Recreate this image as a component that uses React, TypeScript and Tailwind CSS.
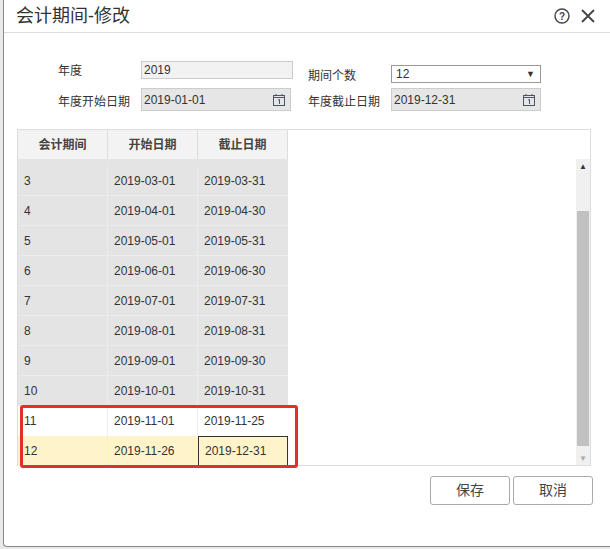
import React from 'react';

const rows = [
  ['3', '2019-03-01', '2019-03-31'],
  ['4', '2019-04-01', '2019-04-30'],
  ['5', '2019-05-01', '2019-05-31'],
  ['6', '2019-06-01', '2019-06-30'],
  ['7', '2019-07-01', '2019-07-31'],
  ['8', '2019-08-01', '2019-08-31'],
  ['9', '2019-09-01', '2019-09-30'],
  ['10', '2019-10-01', '2019-10-31'],
];

const Cal = () => (
  <svg width="14" height="14" viewBox="0 0 14 14" className="text-gray-600">
    <rect x="1.5" y="2.5" width="11" height="10" fill="none" stroke="currentColor" />
    <line x1="1.5" y1="4.5" x2="12.5" y2="4.5" stroke="currentColor" />
    <line x1="4" y1="1" x2="4" y2="3" stroke="currentColor" />
    <line x1="10" y1="1" x2="10" y2="3" stroke="currentColor" />
    <path d="M6 7 L7.5 6.5 V11" fill="none" stroke="currentColor" />
  </svg>
);

export default function App() {
  const font = { fontFamily: '"Liberation Sans", "Noto Sans CJK SC", sans-serif' };
  return (
    <div className="w-[610px] h-[549px] bg-[#e9e9e9] relative" style={font}>
      <div className="absolute left-[3px] top-0 w-[607px] h-[547px] bg-white border-l border-b border-[#888] rounded-bl">
        <div className="h-[33px] border-b border-[#ddd] flex items-center justify-between pl-[12px] pr-[14px]">
          <span className="text-[18px] text-[#333]">会计期间-修改</span>
          <div className="flex items-center gap-[10px] text-[#444]">
            <svg width="16" height="16" viewBox="0 0 16 16">
              <circle cx="8" cy="8" r="7" fill="none" stroke="currentColor" strokeWidth="1.4" />
              <text x="8" y="12" textAnchor="middle" fontSize="10" fontWeight="bold" fill="currentColor">?</text>
            </svg>
            <svg width="16" height="16" viewBox="0 0 16 16">
              <path d="M2 2 L14 14 M14 2 L2 14" stroke="currentColor" strokeWidth="1.8" />
            </svg>
          </div>
        </div>

        <div className="relative h-[90px] text-[12px] text-[#333]">
          <span className="absolute left-[54px] top-[29px]">年度</span>
          <div className="absolute left-[137px] top-[28px] w-[152px] h-[18px] border border-[#ccc] bg-[#f2f2f2] pl-[2px] leading-[16px]">2019</div>
          <span className="absolute left-[304px] top-[34px]">期间个数</span>
          <div className="absolute left-[387px] top-[32px] w-[150px] h-[18px] border border-[#999] bg-white pl-[4px] pr-[5px] leading-[16px] flex justify-between">
            <span>12</span><span className="text-[9px]">▼</span>
          </div>
          <span className="absolute left-[54px] top-[60px]">年度开始日期</span>
          <div className="absolute left-[137px] top-[55px] w-[150px] h-[23px] border border-[#ccc] bg-[#e6e6e6] pl-[2px] flex items-center justify-between pr-[4px]">
            <span>2019-01-01</span><Cal />
          </div>
          <span className="absolute left-[304px] top-[60px]">年度截止日期</span>
          <div className="absolute left-[387px] top-[55px] w-[150px] h-[23px] border border-[#ccc] bg-[#e6e6e6] pl-[2px] flex items-center justify-between pr-[4px]">
            <span>2019-12-31</span><Cal />
          </div>
        </div>

        <div className="absolute left-[13px] top-[129px] w-[574px] h-[337px] border border-[#ddd] text-[12px] text-[#333]">
          <div className="flex h-[29px] font-bold text-[#444]">
            {['会计期间', '开始日期', '截止日期'].map((h) => (
              <div key={h} className="w-[90px] bg-[#f3f3f3] border-r border-[#ddd] flex items-center justify-center">{h}</div>
            ))}
          </div>
          <div className="flex">
            <div className="w-[270px]">
              <div className="h-[7px] bg-[#e4e4e4]" />
              {rows.map((r) => (
                <div key={r[0]} className="flex h-[30px] bg-[#e4e4e4] border-b border-[#ececec]">
                  <div className="w-[90px] pl-[6px] flex items-center border-r border-[#ececec]">{r[0]}</div>
                  <div className="w-[90px] pl-[6px] flex items-center border-r border-[#ececec]">{r[1]}</div>
                  <div className="w-[90px] pl-[6px] flex items-center">{r[2]}</div>
                </div>
              ))}
              <div className="flex h-[30px] bg-white">
                <div className="w-[90px] pl-[6px] flex items-center border-r border-[#eee]">11</div>
                <div className="w-[90px] pl-[6px] flex items-center border-r border-[#eee]">2019-11-01</div>
                <div className="w-[90px] pl-[6px] flex items-center">2019-11-25</div>
              </div>
              <div className="flex h-[30px] bg-[#fff4c9]">
                <div className="w-[90px] pl-[6px] flex items-center border-r border-[#eee]">12</div>
                <div className="w-[90px] pl-[6px] flex items-center">2019-11-26</div>
                <div className="w-[90px] pl-[6px] flex items-center border border-[#333]">2019-12-31</div>
              </div>
            </div>
            <div className="flex-1" />
            <div className="w-[14px] bg-[#f0f0f0] flex flex-col items-center h-[306px] pt-[2px]">
              <span className="text-[8px] text-[#333]">▲</span>
              <div className="mt-[38px] w-[12px] h-[235px] bg-[#c1c1c1]" />
              <span className="text-[8px] text-[#aaa] mt-auto">▼</span>
            </div>
          </div>
          <div className="absolute left-[2px] top-[275px] w-[278px] h-[63px] border-[3px] border-[#e0302a] rounded-[3px]" />
        </div>

        <div className="absolute left-[426px] top-[476px] flex gap-[3px] text-[14px] text-[#444]">
          <button className="w-[80px] h-[29px] border border-[#aaa] rounded-[3px] bg-white">保存</button>
          <button className="w-[80px] h-[29px] border border-[#aaa] rounded-[3px] bg-white">取消</button>
        </div>
      </div>
    </div>
  );
}
